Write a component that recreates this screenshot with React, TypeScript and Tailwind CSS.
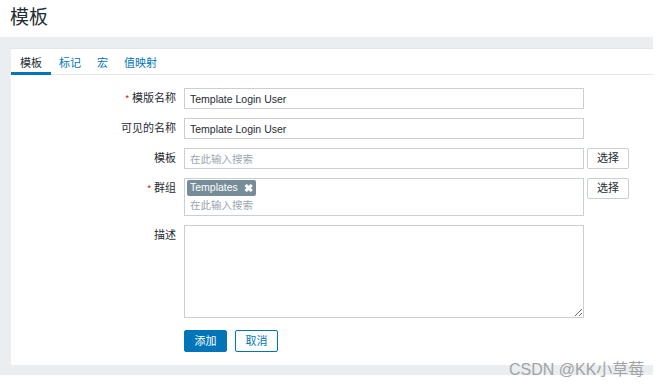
import React from "react";

const font = { fontFamily: '"Liberation Sans", Arial, "Noto Sans CJK SC", sans-serif' };

const Label = ({ text, required }: { text: string; required?: boolean }) => (
  <div className="w-[173px] shrink-0 pr-[8px] h-[21px] leading-[21px] text-right text-[11px] text-[#1f2c33]">
    {required && <span className="text-[#d40000] text-[9px] mr-[3px] align-top">*</span>}
    {text}
  </div>
);

const SelectButton = () => (
  <button className="ml-[3px] w-[42px] h-[21px] border border-[#c8d0d5] rounded-[2px] bg-white text-[11px] text-[#1f2c33] leading-none">
    选择
  </button>
);

const App = () => {
  const tabs = ["模板", "标记", "宏", "值映射"];

  return (
    <div className="relative w-[660px] h-[385px] bg-white overflow-hidden" style={font}>
      <h1 className="h-[37px] pl-[10px] pt-[6px] text-[19px] leading-[24px] text-[#1f2c33]">模板</h1>

      <div className="w-[653px] bg-[#ebeef0] pl-[11px] pt-[11px] pb-[10px]">
        <div className="bg-white h-[317px] border-t border-[#e3e7ea]">
          {/* Tabs */}
          <div className="flex h-[26px] border-b border-[#e6e9eb] text-[11px]">
            {tabs.map((t, i) => (
              <div
                key={t}
                className={
                  i === 0
                    ? "px-[9px] pt-[6px] text-[#1f2c33] border-b-[3px] border-[#0275b8] -mb-px"
                    : "px-[8px] pt-[6px] text-[#0275b8]"
                }
              >
                {t}
              </div>
            ))}
          </div>

          {/* Form */}
          <div className="flex flex-col gap-[9px] pt-[13px]">
            <div className="flex">
              <Label text="模版名称" required />
              <input
                readOnly
                value="Template Login User"
                className="w-[400px] h-[21px] border border-[#c8d0d5] px-[5px] text-[10.5px] text-[#1f2c33] outline-none"
              />
            </div>
            <div className="flex">
              <Label text="可见的名称" />
              <input
                readOnly
                value="Template Login User"
                className="w-[400px] h-[21px] border border-[#c8d0d5] px-[5px] text-[10.5px] text-[#1f2c33] outline-none"
              />
            </div>
            <div className="flex">
              <Label text="模板" />
              <input
                readOnly
                placeholder="在此输入搜索"
                className="w-[400px] h-[21px] border border-[#c8d0d5] px-[5px] text-[10.5px] placeholder:text-[#9aa7ae] outline-none"
              />
              <SelectButton />
            </div>
            <div className="flex">
              <Label text="群组" required />
              <div className="w-[400px] h-[38px] border border-[#c8d0d5] px-[2px] pt-[1px] flex flex-col items-start">
                <span className="flex items-center h-[16px] px-[3px] bg-[#768d99] text-white text-[10.5px] rounded-[2px]">
                  Templates
                  <span className="ml-[6px] text-[11px] font-bold leading-none">✖</span>
                </span>
                <div className="pl-[3px] text-[10.5px] leading-[18px] text-[#9aa7ae]">在此输入搜索</div>
              </div>
              <SelectButton />
            </div>
            <div className="flex">
              <Label text="描述" />
              <textarea className="w-[400px] h-[93px] border border-[#c8d0d5] outline-none" />
            </div>
            <div className="flex mt-[3px] pl-[173px] gap-[8px]">
              <button className="w-[43px] h-[22px] bg-[#0275b8] border border-[#0275b8] rounded-[2px] text-white text-[11px]">
                添加
              </button>
              <button className="w-[43px] h-[22px] bg-white border border-[#0275b8] rounded-[2px] text-[#0275b8] text-[11px]">
                取消
              </button>
            </div>
          </div>
        </div>
      </div>

      <div className="absolute left-[509px] top-[358px] text-[16px] text-[#a3a3a3]">
        CSDN @KK小草莓
      </div>
    </div>
  );
};

export default App;
